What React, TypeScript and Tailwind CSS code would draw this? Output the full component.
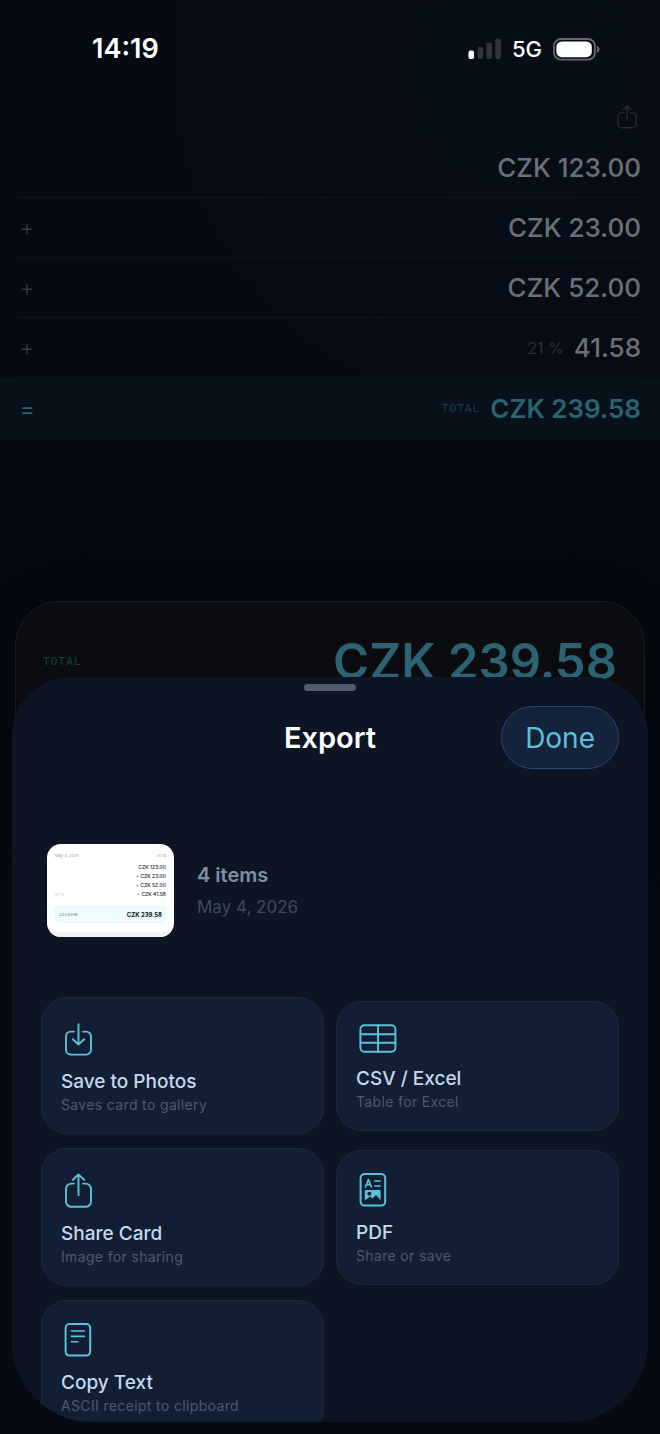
import type { ReactNode } from "react";

type Entry = { op: string; amount: string; note?: string };

const entries: Entry[] = [
  { op: "", amount: "CZK 123.00" },
  { op: "+", amount: "CZK 23.00" },
  { op: "+", amount: "CZK 52.00" },
  { op: "+", amount: "41.58", note: "21 %" },
];

function StatusBar() {
  return (
    <header className="flex h-[98px] items-center justify-between pr-[60px] pl-[92px] text-white">
      <time className="text-[27px] leading-8 font-semibold">14:19</time>
      <div className="flex items-center">
        <svg width="34" height="22" viewBox="0 0 34 22" aria-label="Signal" role="img">
          <rect x="0.5" y="12.5" width="5.6" height="8.5" rx="2" fill="#fff" />
          <rect x="9.5" y="9" width="5.6" height="12" rx="2" fill="#2e333d" />
          <rect x="18.4" y="4.5" width="5.6" height="16.5" rx="2" fill="#2e333d" />
          <rect x="27.3" y="0.5" width="5.6" height="20.5" rx="2" fill="#2e333d" />
        </svg>
        <span className="ml-[10px] text-[22px] leading-8 font-medium">5G</span>
        <svg className="ml-[11px]" width="47" height="23" viewBox="0 0 47 23" aria-label="Battery" role="img">
          <rect x="1" y="1" width="41" height="20.6" rx="7" fill="none" stroke="#636772" strokeWidth="1.8" />
          <rect x="3.4" y="3.4" width="35.4" height="15.8" rx="5.4" fill="#fff" />
          <path d="M44 7.8c1.5.5 2.5 1.9 2.5 3.5s-1 3-2.5 3.5z" fill="#636772" />
        </svg>
      </div>
    </header>
  );
}

function Row({ op, amount, note }: Entry) {
  return (
    <li className="mx-[18px] flex h-[60px] items-center border-b border-[#0f151f] pr-px pl-px">
      <span className="w-4 text-[24px] leading-8 font-light text-[#333941]">{op}</span>
      <span className="ml-auto flex items-center gap-[10px]">
        {note && <span className="text-[16px] leading-6 text-[#2a3038]">{note}</span>}
        <span className="text-[26px] leading-8 font-medium text-[#6a7079]">{amount}</span>
      </span>
    </li>
  );
}

function TotalLabel() {
  return (
    <span className="font-['DejaVu_Sans_Mono',monospace] text-[11px] leading-4 tracking-widest text-[#1a3f45]">
      TOTAL
    </span>
  );
}

function ShareGlyph() {
  return (
    <svg width="20" height="25" viewBox="0 0 20 25" fill="none" stroke="#252b34" strokeWidth="1.4" strokeLinecap="round" strokeLinejoin="round">
      <path d="M6.8 7.6H4.6A3.6 3.6 0 0 0 1 11.2v8a3.6 3.6 0 0 0 3.6 3.6h10.8a3.6 3.6 0 0 0 3.6-3.6v-8a3.6 3.6 0 0 0-3.6-3.6h-2.2" />
      <path d="M10 15V1M6.4 4.5 10 1l3.6 3.5" />
    </svg>
  );
}

const stroke = {
  fill: "none",
  stroke: "#5cc0da",
  strokeWidth: 1.9,
  strokeLinecap: "round" as const,
  strokeLinejoin: "round" as const,
};

const saveIcon = (
  <svg width="34" height="36" viewBox="0 0 34 36" {...stroke}>
    <path d="M13 11.6H9.8a4.8 4.8 0 0 0-4.8 4.8v13.4a4.8 4.8 0 0 0 4.8 4.8h15.4a4.8 4.8 0 0 0 4.8-4.8V16.4a4.8 4.8 0 0 0-4.8-4.8H22" />
    <path d="M17.5 4.2v20.4M11.8 19.2l5.7 5.4 5.7-5.4" />
  </svg>
);

const tableIcon = (
  <svg width="42" height="29" viewBox="0 0 42 29" {...stroke}>
    <rect x="4.4" y="1.2" width="35" height="26.6" rx="4" />
    <path d="M4.4 10.2h35M4.4 18.8h35M22 1.2v26.6" />
  </svg>
);

const shareIcon = (
  <svg width="34" height="37" viewBox="0 0 34 37" {...stroke}>
    <path d="M13 12.6H10.4a5.4 5.4 0 0 0-5.4 5.4v12.4a5.4 5.4 0 0 0 5.4 5.4h14.2a5.4 5.4 0 0 0 5.4-5.4V18a5.4 5.4 0 0 0-5.4-5.4H22" />
    <path d="M17.5 24.2V3.4M11.8 8.8l5.7-5.4 5.7 5.4" />
  </svg>
);

const pdfIcon = (
  <svg width="34" height="34" viewBox="0 0 34 34" {...stroke}>
    <rect x="4.6" y="1" width="24.6" height="31.6" rx="4" strokeWidth="2" />
    <path d="M9.4 14 12.4 6.6 15.4 14M10.4 11.6h4M18.8 8h5.4M18.8 13h5.4" strokeWidth="1.6" />
    <path
      d="M9.8 17h13.8a1 1 0 0 1 1 1v9l-4.6-5-3.6 3.6-2.4-2.2-5.2 4V18a1 1 0 0 1 1-1zM13.4 22.8a2 2 0 1 0 0-4 2 2 0 0 0 0 4z"
      fill="#5cc0da"
      fillRule="evenodd"
      stroke="none"
    />
  </svg>
);

const textIcon = (
  <svg width="34" height="34" viewBox="0 0 34 34" {...stroke}>
    <rect x="4.6" y="1" width="24.6" height="31.6" rx="4" strokeWidth="2" />
    <path d="M10.4 8h13M10.4 13.4h13M10.4 18.8h6.5" strokeWidth="1.6" />
  </svg>
);

function ExportOption({ icon, title, detail }: { icon: ReactNode; title: string; detail: string }) {
  return (
    <button
      type="button"
      className="flex w-full flex-col items-start rounded-[26px] border border-[#1b2a3b] bg-[#121e33] px-[19px] pt-[22px] pb-[18px] text-left"
    >
      {icon}
      <span className="mt-[14px] text-[19px] leading-6 font-medium text-[#c4d8ee]">{title}</span>
      <span className="mt-px text-[14px] leading-5 tracking-wide text-[#4c5a6d]">{detail}</span>
    </button>
  );
}

function ReceiptPreview() {
  return (
    <div className="flex h-[93px] w-[127px] shrink-0 flex-col overflow-hidden rounded-[14px] bg-white text-[5px] leading-[9px] text-[#1d232b]">
      <div className="flex justify-between px-2 pt-[7px] text-[4px] text-[#9aa0a8]">
        <span>May 4, 2026</span>
        <span>14:19</span>
      </div>
      <ul className="mt-[3px] px-2 text-right font-medium">
        <li>CZK 123.00</li>
        <li>
          <span className="text-[#8a9098]">+</span> CZK 23.00
        </li>
        <li>
          <span className="text-[#8a9098]">+</span> CZK 52.00
        </li>
        <li className="flex justify-between">
          <span className="text-[4px] font-normal text-[#b4b9c0]">21 %</span>
          <span>
            <span className="text-[#8a9098]">+</span> CZK 41.58
          </span>
        </li>
      </ul>
      <div className="mx-2 mt-[7px] flex h-[17px] items-center justify-between rounded-[4px] border border-[#e6f8fa] bg-[#effcfd] px-[3px]">
        <span className="text-[4px] tracking-widest text-[#56717a]">CELKEM</span>
        <span className="text-[6px] font-bold text-[#0c1117]">CZK 239.58</span>
      </div>
      <div className="mt-auto h-[5px] bg-[#f0f1f2]" />
    </div>
  );
}

function ExportSheet() {
  return (
    <section
      role="dialog"
      aria-labelledby="export-title"
      className="absolute inset-x-3 bottom-3 h-[745px] overflow-hidden rounded-t-[58px] rounded-b-[80px] bg-[#0d1525] px-[29px] pt-[7px]"
    >
      <div className="mx-auto h-[7px] w-[52px] rounded-full bg-[#535b6c]" />
      <div className="mt-[15px] grid grid-cols-[1fr_auto_1fr] items-center">
        <h1 id="export-title" className="col-start-2 text-[29px] leading-9 font-semibold text-white">
          Export
        </h1>
        <button
          type="button"
          className="h-[63px] justify-self-end rounded-full border border-[#2b4478] bg-[#15233a] px-[23px] text-[28px] leading-9 text-[#5cc0da]"
        >
          Done
        </button>
      </div>
      <div className="mt-[75px] flex items-center gap-[23px] pl-1.5">
        <ReceiptPreview />
        <div className="flex flex-col gap-1">
          <p className="text-[20px] leading-7 font-semibold text-[#7c8fa5]">4 items</p>
          <p className="text-[17px] leading-7 text-[#3e4a5c]">May 4, 2026</p>
        </div>
      </div>
      <div className="mt-[60px] grid grid-cols-2 items-center gap-x-3 gap-y-3.5">
        <ExportOption icon={saveIcon} title="Save to Photos" detail="Saves card to gallery" />
        <ExportOption icon={tableIcon} title="CSV / Excel" detail="Table for Excel" />
        <ExportOption icon={shareIcon} title="Share Card" detail="Image for sharing" />
        <ExportOption icon={pdfIcon} title="PDF" detail="Share or save" />
        <ExportOption icon={textIcon} title="Copy Text" detail="ASCII receipt to clipboard" />
      </div>
    </section>
  );
}

export default function App() {
  return (
    <div className="relative flex min-h-screen flex-col overflow-hidden bg-[#050a13] bg-[radial-gradient(circle_at_78%_5%,#080e18_0%,#050a13_30%)] font-['Inter','Liberation_Sans',sans-serif]">
      <StatusBar />
      <main className="flex grow flex-col">
        <div className="flex h-10 items-start justify-end pt-[7px] pr-[23px]">
          <button type="button" aria-label="Share">
            <ShareGlyph />
          </button>
        </div>
        <ul>
          {entries.map((e) => (
            <Row key={e.amount} {...e} />
          ))}
        </ul>
        <div className="flex h-[62px] items-center bg-[#06111a] pr-[19px] pl-5">
          <span className="text-[22px] leading-8 text-[#29636f]">=</span>
          <span className="ml-auto flex items-center gap-[10px]">
            <TotalLabel />
            <span className="text-[26px] leading-8 font-semibold text-[#2b6372]">CZK 239.58</span>
          </span>
        </div>
        <div className="mx-[15px] mt-[161px] flex h-[260px] flex-col rounded-[44px] border border-[#191b1e] bg-[#0b0c0f] px-[27px] pt-7 shadow-[0_0_50px_12px_#03060c]">
          <div className="flex items-center justify-between">
            <TotalLabel />
            <span className="text-[49px] leading-[64px] font-semibold text-[#2b6372]">CZK 239.58</span>
          </div>
        </div>
      </main>
      <ExportSheet />
    </div>
  );
}
